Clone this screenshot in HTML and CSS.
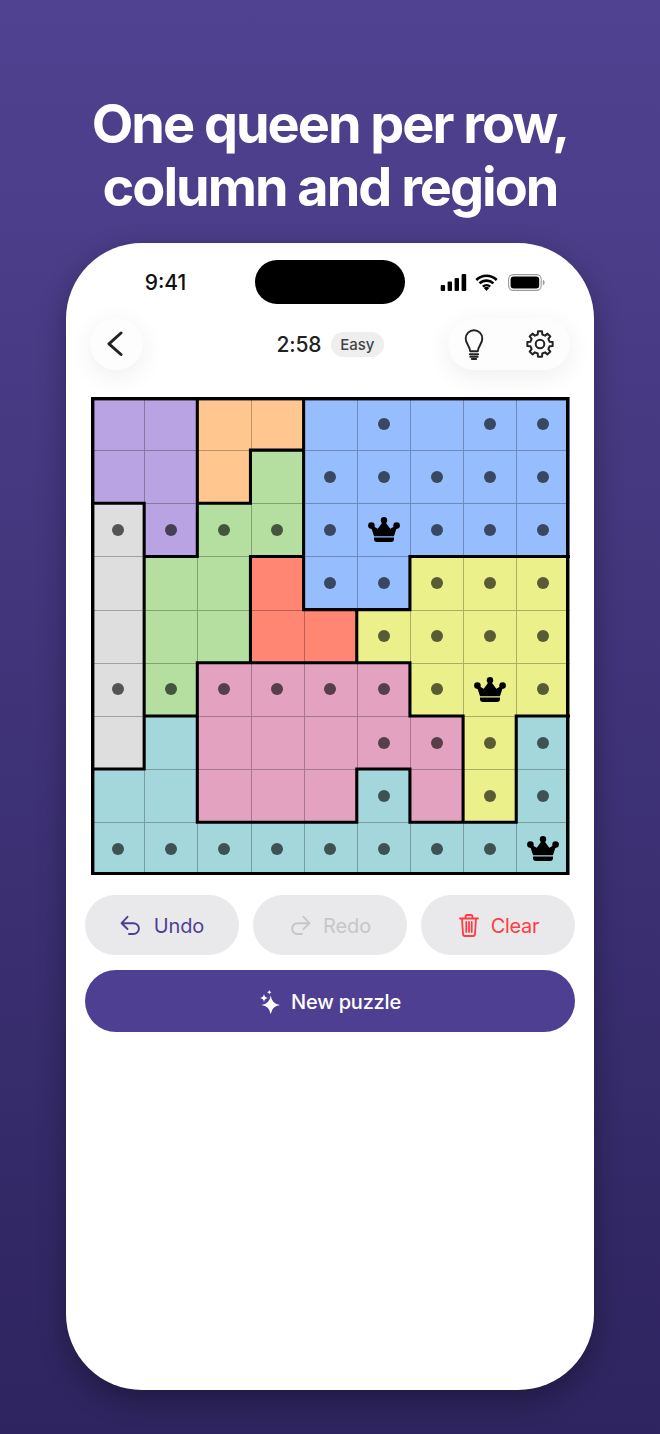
FILE: index.html
```html
<!DOCTYPE html>
<html lang="en">
<head>
<meta charset="utf-8">
<title>Queens</title>
<link rel="stylesheet" href="styles.css">
</head>
<body>
<svg class="defs" width="0" height="0" aria-hidden="true">
  <symbol id="crown" viewBox="0 0 32 25">
    <circle cx="3.4" cy="8.600" r="3.300"/><circle cx="16" cy="3.300" r="3.200"/><circle cx="28.600" cy="8.600" r="3.300"/>
    <path d="M3.500 9 10 12.800 16 4.500 22 12.800 28.500 9 25.400 18.400H6.600Z" stroke="#000" stroke-width="1.500" stroke-linejoin="round"/>
    <path d="M6 20.600H26V22A3 3 0 0 1 23 25H9A3 3 0 0 1 6 22Z"/>
  </symbol>
  <symbol id="undo" viewBox="0 0 22 22">
    <path d="M7.500 1.800 1.600 8.200 7.500 14M1.600 8.200H13.500A5.400 5.400 0 0 1 13.500 19H9" fill="none" stroke="currentColor" stroke-width="1.900" stroke-linecap="round" stroke-linejoin="round"/>
  </symbol>
</svg>
<main class="screen">
  <h1 class="headline">One queen per row,<br>column and region</h1>
  <section class="phone">
    <div class="status">
      <span class="clock">9:41</span>
      <span class="island"></span>
      <span class="status-icons">
        <svg class="signal" width="27" height="17" viewBox="0 0 27 17"><rect x="0.7" y="11" width="4.4" height="6" rx="1"/><rect x="7.6" y="7.5" width="4.4" height="9.5" rx="1"/><rect x="14.6" y="4" width="4.4" height="13" rx="1"/><rect x="21.6" y="0" width="4.6" height="17" rx="1"/></svg>
        <svg class="wifi" width="23" height="17" viewBox="0 0 23 17"><path d="M1.300 6A14.500 14.500 0 0 1 21.700 6M4.600 9.400A10 10 0 0 1 18.400 9.400M7.900 12.600A5.400 5.400 0 0 1 15.100 12.600" fill="none" stroke="#000" stroke-width="2.600"/><path d="M11.500 17 8.800 14.100A4 4 0 0 1 14.200 14.100Z"/></svg>
        <svg class="battery" width="37" height="17" viewBox="0 0 37 17"><rect x="0.6" y="0.6" width="32.6" height="15.8" rx="4.6" fill="none" stroke="#9a9a9a" stroke-width="1.1"/><rect x="2.6" y="2.6" width="28.6" height="11.8" rx="3"/><path d="M34.800 5.800C36 6.200 36.600 7.200 36.600 8.500S36 10.800 34.800 11.200Z" fill="#9a9a9a"/></svg>
      </span>
    </div>

    <header class="toolbar">
      <button class="round-btn" type="button" aria-label="Back">
        <svg width="18" height="26" viewBox="0 0 18 26"><path d="M15 2 3 12.800 15 23.500" fill="none" stroke="#222" stroke-width="3" stroke-linecap="round" stroke-linejoin="round"/></svg>
      </button>
      <div class="game-info">
        <span class="timer">2:58</span>
        <span class="level">Easy</span>
      </div>
      <div class="tools">
        <svg width="20" height="32" viewBox="0 0 20 32" fill="none" stroke="#222" stroke-width="1.9" stroke-linecap="round" stroke-linejoin="round"><path d="M6.200 23.300C6.200 18.800 1.700 16 1.700 10.500A8.300 8.300 0 0 1 18.300 10.500C18.300 16 13.800 18.800 13.800 23.300Z"/><path d="M5.800 26.300H14.200M6.300 28.800H13.700M7.800 31H12.200"/></svg>
        <svg width="28" height="28" viewBox="-14 -14 28 28" fill="none" stroke="#222" stroke-width="2" stroke-linejoin="round"><polygon points="-2.290,-9.530 -2,-12.640 2,-12.640 2.290,-9.530 5.120,-8.360 7.520,-10.360 10.360,-7.520 8.360,-5.120 9.530,-2.290 12.640,-2 12.640,2 9.530,2.290 8.360,5.120 10.360,7.520 7.520,10.360 5.120,8.360 2.290,9.530 2,12.640 -2,12.640 -2.290,9.530 -5.120,8.360 -7.520,10.360 -10.360,7.520 -8.360,5.120 -9.530,2.290 -12.640,2 -12.640,-2 -9.530,-2.290 -8.360,-5.120 -10.360,-7.520 -7.520,-10.360 -5.120,-8.360"/><circle r="4.300"/></svg>
      </div>
    </header>

    <div class="board">
      <div class="cell purple"></div><div class="cell purple"></div><div class="cell orange"></div><div class="cell orange"></div><div class="cell blue"></div><div class="cell blue"><i class="dot"></i></div><div class="cell blue"></div><div class="cell blue"><i class="dot"></i></div><div class="cell blue"><i class="dot"></i></div>

      <div class="cell purple"></div><div class="cell purple"></div><div class="cell orange"></div><div class="cell green"></div><div class="cell blue"><i class="dot"></i></div><div class="cell blue"><i class="dot"></i></div><div class="cell blue"><i class="dot"></i></div><div class="cell blue"><i class="dot"></i></div><div class="cell blue"><i class="dot"></i></div>

      <div class="cell grey"><i class="dot"></i></div><div class="cell purple"><i class="dot"></i></div><div class="cell green"><i class="dot"></i></div><div class="cell green"><i class="dot"></i></div><div class="cell blue"><i class="dot"></i></div><div class="cell blue"><svg class="queen"><use href="#crown"/></svg></div><div class="cell blue"><i class="dot"></i></div><div class="cell blue"><i class="dot"></i></div><div class="cell blue"><i class="dot"></i></div>

      <div class="cell grey"></div><div class="cell green"></div><div class="cell green"></div><div class="cell red"></div><div class="cell blue"><i class="dot"></i></div><div class="cell blue"><i class="dot"></i></div><div class="cell yellow"><i class="dot"></i></div><div class="cell yellow"><i class="dot"></i></div><div class="cell yellow"><i class="dot"></i></div>

      <div class="cell grey"></div><div class="cell green"></div><div class="cell green"></div><div class="cell red"></div><div class="cell red"></div><div class="cell yellow"><i class="dot"></i></div><div class="cell yellow"><i class="dot"></i></div><div class="cell yellow"><i class="dot"></i></div><div class="cell yellow"><i class="dot"></i></div>

      <div class="cell grey"><i class="dot"></i></div><div class="cell green"><i class="dot"></i></div><div class="cell pink"><i class="dot"></i></div><div class="cell pink"><i class="dot"></i></div><div class="cell pink"><i class="dot"></i></div><div class="cell pink"><i class="dot"></i></div><div class="cell yellow"><i class="dot"></i></div><div class="cell yellow"><svg class="queen"><use href="#crown"/></svg></div><div class="cell yellow"><i class="dot"></i></div>

      <div class="cell grey"></div><div class="cell teal"></div><div class="cell pink"></div><div class="cell pink"></div><div class="cell pink"></div><div class="cell pink"><i class="dot"></i></div><div class="cell pink"><i class="dot"></i></div><div class="cell yellow"><i class="dot"></i></div><div class="cell teal"><i class="dot"></i></div>

      <div class="cell teal"></div><div class="cell teal"></div><div class="cell pink"></div><div class="cell pink"></div><div class="cell pink"></div><div class="cell teal"><i class="dot"></i></div><div class="cell pink"></div><div class="cell yellow"><i class="dot"></i></div><div class="cell teal"><i class="dot"></i></div>

      <div class="cell teal"><i class="dot"></i></div><div class="cell teal"><i class="dot"></i></div><div class="cell teal"><i class="dot"></i></div><div class="cell teal"><i class="dot"></i></div><div class="cell teal"><i class="dot"></i></div><div class="cell teal"><i class="dot"></i></div><div class="cell teal"><i class="dot"></i></div><div class="cell teal"><i class="dot"></i></div><div class="cell teal"><svg class="queen"><use href="#crown"/></svg></div>

      <svg class="walls" viewBox="0 0 9 9" aria-hidden="true">
        <path class="inner" d="M1 2V7M2 0V3M2 5V8M3 1V2M3 3V5M4 0V4M5 4V5M5 7V8M6 3V4M6 5V6M6 7V8M7 6V8M8 6V8M3 1H4M0 2H1M2 2H3M1 3H2M3 3H4M6 3H9M4 4H6M2 5H6M1 6H2M6 6H7M8 6H9M0 7H1M5 7H6M2 8H5M6 8H8"/>
        <rect class="outer" x="0.032" y="0.032" width="8.936" height="8.936"/>
      </svg>
    </div>

    <div class="actions">
      <button class="pill undo" type="button"><svg class="pill-icon"><use href="#undo"/></svg>Undo</button>
      <button class="pill redo" type="button"><svg class="pill-icon flip"><use href="#undo"/></svg>Redo</button>
      <button class="pill clear" type="button">
        <svg width="20" height="23" viewBox="0 0 20 23" fill="none" stroke="currentColor" stroke-width="1.800" stroke-linecap="round" stroke-linejoin="round"><path d="M1 4.500H19M6.500 4.500V2.800A1.800 1.800 0 0 1 8.300 1H11.700A1.800 1.800 0 0 1 13.500 2.800V4.500M3 4.500 4 20A2 2 0 0 0 6 22H14A2 2 0 0 0 16 20L17 4.500M7.300 8V18M10 8V18M12.700 8V18"/></svg>
        Clear
      </button>
    </div>
    <button class="new-puzzle" type="button">
      <svg width="24" height="24" viewBox="0 0 24 24" fill="#fff"><path d="M11.700 5.500Q12.700 13.800 21 15 12.700 16.200 11.700 24.500 10.700 16.200 2.400 15 10.700 13.800 11.700 5.500Z"/><path d="M5 3.800Q5.400 7.600 9 8 5.400 8.400 5 12.200 4.600 8.400 1 8 4.600 7.600 5 3.800Z"/><path d="M10.300 0Q10.500 2.100 12.500 2.300 10.500 2.500 10.300 4.600 10.100 2.500 8.100 2.300 10.100 2.100 10.300 0Z"/></svg>
      New puzzle
    </button>
  </section>
</main>
</body>
</html>
```

FILE: styles.css
```css
* { box-sizing: border-box; }

html, body {
  margin: 0;
  padding: 0;
}

body {
  width: 660px;
  height: 1434px;
  overflow: hidden;
  font-family: Inter, "Liberation Sans", sans-serif;
}

.defs { position: absolute; }

.screen {
  height: 1434px;
  padding-top: 92px;
  background: linear-gradient(180deg, #514291 0%, #2e245f 100%);
}

.headline {
  margin: 0;
  color: #fff;
  font-size: 54px;
  font-weight: 700;
  line-height: 63px;
  letter-spacing: -2px;
  text-align: center;
}

.phone {
  width: 528px;
  height: 1147px;
  margin: 25px auto 0;
  padding-top: 17px;
  background: #fff;
  border-radius: 76px;
  box-shadow: 0 10px 28px rgba(0, 0, 0, 0.32);
}

.status {
  display: grid;
  grid-template-columns: 1fr 150px 1fr;
  align-items: center;
  height: 44px;
}

.clock {
  padding-left: 10px;
  color: #111;
  font-size: 21px;
  font-weight: 500;
  text-align: center;
}

.island {
  height: 44px;
  background: #000;
  border-radius: 22px;
}

.status-icons {
  display: flex;
  align-items: center;
  gap: 9px;
  padding-left: 35px;
}

.status-icons svg { display: block; flex: none; }

.wifi { margin-left: -1px; }
.battery { margin-left: 1px; }

.toolbar {
  display: grid;
  grid-template-columns: 1fr auto 1fr;
  align-items: center;
  margin-top: 14px;
  padding: 0 24px;
}

.round-btn {
  display: flex;
  align-items: center;
  justify-content: center;
  width: 53px;
  height: 52px;
  padding: 0 3px 0 0;
  background: #fdfdfd;
  border: 0;
  border-radius: 50%;
  box-shadow: 0 6px 26px rgba(0, 0, 0, 0.07);
}

.game-info {
  display: flex;
  align-items: center;
  gap: 10px;
}

.timer {
  color: #222;
  font-size: 21px;
  font-weight: 500;
  letter-spacing: -0.2px;
}

.level {
  padding: 3px 9px;
  background: #eeeeee;
  border-radius: 13px;
  color: #444;
  font-size: 15px;
  font-weight: 500;
  line-height: 19px;
}

.tools {
  display: flex;
  align-items: center;
  justify-self: end;
  gap: 42px;
  width: 122px;
  height: 52px;
  padding-left: 16px;
  background: #fdfdfd;
  border-radius: 26px;
  box-shadow: 0 6px 26px rgba(0, 0, 0, 0.07);
}

.board {
  position: relative;
  display: grid;
  grid-template-columns: repeat(9, 1fr);
  grid-template-rows: repeat(9, 1fr);
  width: 478.4px;
  height: 478.4px;
  margin: 27px 0 0 25.2px;
}

.cell {
  display: flex;
  align-items: center;
  justify-content: center;
  padding: 0 1px 1px 0;
  border-left: 1px solid rgba(0, 0, 0, 0.27);
  border-top: 1px solid rgba(0, 0, 0, 0.27);
}

.purple { background: #b9a3e3; }
.orange { background: #ffc78f; }
.blue { background: #96bdfe; }
.green { background: #b4dfa0; }
.grey { background: #dedede; }
.red { background: #ff8672; }
.yellow { background: #ebf08a; }
.pink { background: #e4a2c1; }
.teal { background: #a4d7db; }

.dot {
  width: 12px;
  height: 12px;
  background: rgba(0, 0, 0, 0.62);
  border-radius: 50%;
}

.queen {
  width: 32px;
  height: 25px;
  fill: #000;
}

.walls {
  position: absolute;
  inset: 0;
  width: 100%;
  height: 100%;
  fill: none;
  stroke: #000;
}

.inner {
  stroke-width: 0.058;
  stroke-linecap: square;
}

.outer { stroke-width: 0.064; }

.actions {
  display: grid;
  grid-template-columns: repeat(3, 154px);
  gap: 14px;
  margin: 20px 19px 0;
}

.pill {
  display: flex;
  align-items: center;
  justify-content: center;
  gap: 12px;
  height: 60px;
  padding: 1px 0 0;
  background: #e9e9ec;
  border: 0;
  border-radius: 30px;
  font-family: inherit;
  font-size: 20px;
  font-weight: 400;
  letter-spacing: -0.1px;
}

.pill-icon { width: 22px; height: 22px; }
.flip { transform: scaleX(-1); }

.undo { color: #4f3f92; }
.redo { color: #c6c6c9; }

.clear {
  padding-left: 2px;
  color: #ff3b44;
  letter-spacing: -0.3px;
}

.new-puzzle {
  display: flex;
  align-items: center;
  justify-content: center;
  gap: 8px;
  width: 490px;
  height: 62px;
  margin: 15px 19px 0;
  padding: 1px 0 0;
  background: #4f3f92;
  border: 0;
  border-radius: 31px;
  color: #fff;
  font-family: inherit;
  font-size: 20px;
  font-weight: 500;
  letter-spacing: -0.2px;
}
```
